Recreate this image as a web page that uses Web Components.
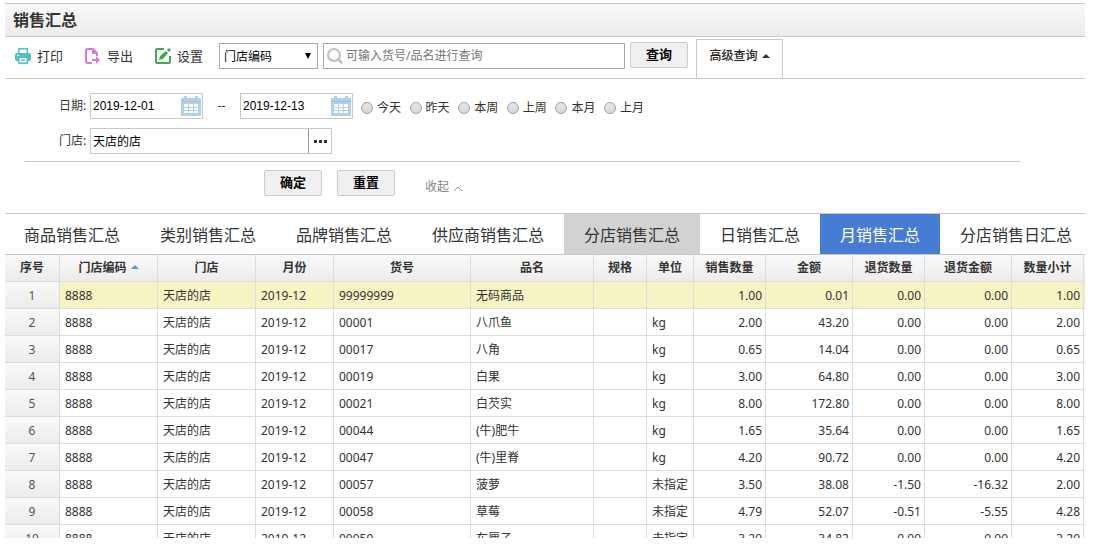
<!DOCTYPE html>
<html lang="zh-CN">
<head>
<meta charset="utf-8">
<title>销售汇总</title>
<style>
  html, body { margin: 0; height: 100%; }
  body { background: #fff; color: #333; font: 12px/18px "Noto Sans", "Noto Sans CJK SC", sans-serif; }
</style>
</head>
<body>
<sales-page></sales-page>

<template id="page-tpl">
  <style>
    :host { display: flex; flex-direction: column; box-sizing: border-box; height: 100vh; padding: 3px 9px 11px 5px; overflow: hidden; }
    h1 { margin: 0; padding: 0 8px; height: 32px; line-height: 32px; font-size: 16px; font-weight: 700; border: solid #c8c8c8; border-width: 1px 0; background: linear-gradient(#f8f8f8, #ececec); }
    .toolbar { display: flex; align-items: flex-start; border-bottom: 1px solid #c8c8c8; height: 41px; }
    .tools { display: flex; gap: 22px; padding: 9px 16px 0 10px; }
    .query { display: flex; gap: 5px; padding-top: 6px; }
    select { appearance: none; box-sizing: border-box; width: 99px; height: 26px; margin: 0; padding: 1px 4px 0; border: 1px solid #a9a9a9; border-radius: 0; font: inherit; color: #000;
      background: #fff url("data:image/svg+xml,%3Csvg xmlns='http://www.w3.org/2000/svg' width='6' height='6'%3E%3Cpath d='M0 0h6L3 6z'/%3E%3C/svg%3E") no-repeat right 6px center; }
    .search { display: flex; align-items: center; box-sizing: border-box; width: 302px; height: 26px; border: 1px solid #a9a9a9; padding-left: 2px; }
    .search svg { flex: none; }
    .search input { flex: 1; min-width: 0; border: 0; outline: 0; padding: 0 2px; font: inherit; background: none; }
    .search input::placeholder { color: #757575; }
    .adv { box-sizing: border-box; width: 87px; height: 39px; margin: 2px 0 0 8px; padding: 0 0 6px; border: 1px solid #c8c8c8; border-bottom: 0; background: #fff; font: inherit; color: #222; display: flex; align-items: center; justify-content: center; gap: 4px; font-weight: 500; }
  </style>
  <h1>销售汇总</h1>
  <div class="toolbar">
    <div class="tools">
      <tool-button label="打印"><svg slot="icon" width="16" height="16" viewBox="0 0 16 16"><path fill="#4fbdca" fill-rule="evenodd" d="M4 0h8q1 0 1 1v4H3V1q0-1 1-1zM4.500 1.500V5h7V1.500z"/><path fill="#4fbdca" fill-rule="evenodd" d="M2 5h12q2 0 2 2v4q0 2-2 2h-1v2q0 1-1 1H4q-1 0-1-1v-2H2q-2 0-2-2V7q0-2 2-2zM2 7v1h2V7zM4.500 10v4.500h7V10z"/><path fill="#4fbdca" d="M6 11.500h4V13H6z"/></svg></tool-button>
      <tool-button label="导出"><svg slot="icon" width="16" height="16" viewBox="0 0 16 16"><path fill="none" stroke="#cf7be0" stroke-width="2" d="M12 8V5L8 1H3Q1 1 1 3v10q0 2 2 2h4"/><path fill="#cf7be0" d="M7 1h1l5 5H8Q7 6 7 5zM7 11h4V8l4 4-4 4v-3H7z"/></svg></tool-button>
      <tool-button label="设置"><svg slot="icon" width="16" height="16" viewBox="0 0 16 16"><path fill="none" stroke="#41ab4b" stroke-width="2" d="M9 1H2Q1 1 1 2v12q0 1 1 1h12q1 0 1-1V8"/><path fill="#41ab4b" d="M4 12l1-4 6-5 2 2-5 6zM12 2l2-2 2 2-2 2z"/></svg></tool-button>
    </div>
    <div class="query">
      <select aria-label="查询字段"><option>门店编码</option></select>
      <label class="search">
        <svg width="18" height="18" viewBox="0 0 18 18" fill="none" stroke="#bdbdbd"><circle cx="8" cy="8" r="6" stroke-width="2"/><path d="M12 12l4 4" stroke-width="2.500"/></svg>
        <input type="text" placeholder="可输入货号/品名进行查询" aria-label="查询">
      </label>
    </div>
    <push-button class="go">查询</push-button>
    <button class="adv" type="button" aria-expanded="true">高级查询<svg width="8" height="4" viewBox="0 0 8 4"><path d="M0 4l4-4 4 4z" fill="#333"/></svg></button>
  </div>
  <style>.go { margin: 5px 0 0 5px; }</style>
  <advanced-query></advanced-query>
  <report-tabs></report-tabs>
  <sales-grid></sales-grid>
</template>

<template id="tool-tpl">
  <style>
    :host { display: block; }
    button { display: flex; align-items: center; gap: 6px; padding: 0; border: 0; background: none; color: inherit; font: inherit; font-size: 13px; line-height: 20px; }
    ::slotted(svg) { display: block; }
  </style>
  <button type="button"><slot name="icon"></slot><span></span></button>
</template>

<template id="push-tpl">
  <style>
    :host { display: block; }
    button { box-sizing: border-box; width: 58px; height: 26px; padding: 0 0 2px; border: 1px solid #ccc; border-radius: 2px; background: #f0f0f0; color: #000; font: inherit; font-size: 13px; font-weight: 700; line-height: 22px; }
  </style>
  <button type="button"><slot></slot></button>
</template>

<template id="adv-tpl">
  <style>
    :host { display: block; height: 134px; flex: none; }
    .row { display: flex; align-items: center; height: 26px; padding-left: 54px; }
    .row.first { margin: 14px 0 9px; }
    .name { width: 31px; line-height: 24px; }
    .dash { width: 37px; text-align: center; }
    fieldset { display: flex; justify-content: space-between; width: 283px; margin: 0 0 0 8px; padding: 4px 0 0; border: 0; }
    fieldset label { display: flex; align-items: center; gap: 4px; }
    input[type=radio] { appearance: none; box-sizing: border-box; width: 12px; height: 12px; margin: 0; border: 1px solid #a2a2a2; border-radius: 50%; background: linear-gradient(#e8e8e8, #d6d6d6); }
    .shop { display: flex; box-sizing: border-box; width: 242px; height: 26px; border: 1px solid #c8c8c8; }
    .shop input { flex: 1; min-width: 0; border: 0; outline: 0; padding: 2px 2px 0; font: inherit; color: #000; }
    .shop button { width: 23px; padding: 0; border: 0; border-left: 1px solid #999; background: #fff; }
    .shop svg { display: block; margin: auto; }
    hr { margin: 7px 65px 8px 20px; border: 0; border-top: 1px solid #c8c8c8; }
    .actions { display: flex; gap: 15px; padding-left: 259px; }
    a { display: flex; align-items: center; gap: 5px; margin: 8px 0 0 15px; height: 18px; color: #888; text-decoration: none; }
    a svg { margin-top: 2px; }
  </style>
  <div class="row first">
    <label class="name" for="from">日期:</label>
    <date-box id="from" value="2019-12-01"></date-box><span class="dash">--</span><date-box value="2019-12-13"></date-box>
    <fieldset aria-label="日期范围">
      <label><input type="radio" name="range">今天</label>
      <label><input type="radio" name="range">昨天</label>
      <label><input type="radio" name="range">本周</label>
      <label><input type="radio" name="range">上周</label>
      <label><input type="radio" name="range">本月</label>
      <label><input type="radio" name="range">上月</label>
    </fieldset>
  </div>
  <div class="row">
    <label class="name" for="shop">门店:</label>
    <div class="shop"><input id="shop" type="text" value="天店的店"><button type="button" aria-label="选择门店"><svg width="13" height="3" viewBox="0 0 13 3" fill="#333"><path d="M0 0h3v3H0zM5 0h3v3H5zM10 0h3v3h-3z"/></svg></button></div>
  </div>
  <hr>
  <div class="actions">
    <push-button>确定</push-button><push-button>重置</push-button>
    <a href="#">收起<svg width="8" height="5" viewBox="0 0 8 5" fill="none" stroke="#999"><path d="M0 5l4-4 4 4"/></svg></a>
  </div>
</template>

<template id="date-tpl">
  <style>
    :host { display: flex; align-items: center; box-sizing: border-box; width: 113px; height: 26px; border: 1px solid #c8c8c8; padding-right: 1px; }
    input { flex: 1; min-width: 0; border: 0; outline: 0; padding: 0 2px; font: 12px/18px "Liberation Sans", sans-serif; color: #000; }
    svg { flex: none; }
  </style>
  <input type="text" aria-label="日期">
  <svg width="20" height="20" viewBox="0 0 20 20"><path fill="#b2d0e8" d="M0 2h3V0h3v2h8V0h3v2h3v18H0z"/><path fill="#9cc2e0" d="M0 5h20v1H0z"/><path fill="#fff" d="M3 8h4v3H3zM8 8h4v3H8zM13 8h4v3h-4zM3 12h4v2H3zM8 12h4v2H8zM13 12h4v2h-4zM3 15h4v2H3zM8 15h4v2H8zM13 15h4v2h-4z"/></svg>
</template>

<template id="tabs-tpl">
  <style>
    :host { display: block; flex: none; border: solid #c8c8c8; border-width: 1px 0; overflow: hidden; }
    nav { display: flex; margin-left: -1px; }
    a { flex: none; height: 40px; line-height: 42px; padding: 0 20px; font-size: 16px; color: #333; text-decoration: none; }
    a.hover { background: #d2d2d2; }
    a.current { background: #467cd4; color: #fff; }
  </style>
  <nav>
    <a href="#">商品销售汇总</a><a href="#">类别销售汇总</a><a href="#">品牌销售汇总</a><a href="#">供应商销售汇总</a><a href="#" class="hover">分店销售汇总</a><a href="#">日销售汇总</a><a href="#" class="current" aria-current="page">月销售汇总</a><a href="#">分店销售日汇总</a>
  </nav>
</template>

<template id="grid-tpl">
  <style>
    :host { display: block; flex: 1; min-height: 0; overflow: hidden; }
    table { width: 100%; table-layout: fixed; border-collapse: separate; border-spacing: 0; }
    th, td { box-sizing: border-box; height: 27px; padding: 2px 5px 0; border: solid #dcdcdc; border-width: 0 1px 1px 0; line-height: 24px; text-align: left; white-space: nowrap; overflow: hidden; }
    thead th { padding-top: 0; text-align: center; font-weight: 700; background: linear-gradient(#f9f9f9, #ececec); }
    tbody th { text-align: center; font-weight: 400; color: #555; background: linear-gradient(#f9f9f9, #ececec); }
    td.num { text-align: right; padding-right: 3px; }
    .fill { padding: 0; border-right: 0; }
    tr.on td { background: #f7f4c4; }
    thead svg { margin-left: 4px; vertical-align: 3px; }
  </style>
  <table>
    <colgroup></colgroup>
    <thead><tr></tr></thead>
    <tbody></tbody>
  </table>
</template>

<script>
  const stamp = (el, id, options) => {
    const root = el.attachShadow({ mode: 'open', ...options });
    root.append(document.getElementById(id).content.cloneNode(true));
    return root;
  };

  customElements.define('tool-button', class extends HTMLElement {
    connectedCallback() {
      if (this.shadowRoot) return;
      stamp(this, 'tool-tpl').querySelector('span').textContent = this.getAttribute('label');
    }
  });

  customElements.define('push-button', class extends HTMLElement {
    constructor() { super(); stamp(this, 'push-tpl'); }
  });

  customElements.define('date-box', class extends HTMLElement {
    static formAssociated = true;
    connectedCallback() {
      if (this.shadowRoot) return;
      stamp(this, 'date-tpl', { delegatesFocus: true }).querySelector('input').value = this.getAttribute('value');
    }
  });

  customElements.define('advanced-query', class extends HTMLElement {
    constructor() { super(); stamp(this, 'adv-tpl'); }
  });

  customElements.define('report-tabs', class extends HTMLElement {
    constructor() { super(); stamp(this, 'tabs-tpl'); }
  });

  const COLUMNS = [
    ['序号', 55], ['门店编码', 98], ['门店', 98], ['月份', 78], ['货号', 137], ['品名', 123], ['规格', 53],
    ['单位', 47], ['销售数量', 72], ['金额', 87], ['退货数量', 72], ['退货金额', 87], ['数量小计', 72]
  ];
  const ROWS = [
    ['99999999', '无码商品', '', '1.00', '0.01', '0.00', '0.00', '1.00'],
    ['00001', '八爪鱼', 'kg', '2.00', '43.20', '0.00', '0.00', '2.00'],
    ['00017', '八角', 'kg', '0.65', '14.04', '0.00', '0.00', '0.65'],
    ['00019', '白果', 'kg', '3.00', '64.80', '0.00', '0.00', '3.00'],
    ['00021', '白芡实', 'kg', '8.00', '172.80', '0.00', '0.00', '8.00'],
    ['00044', '(牛)肥牛', 'kg', '1.65', '35.64', '0.00', '0.00', '1.65'],
    ['00047', '(牛)里脊', 'kg', '4.20', '90.72', '0.00', '0.00', '4.20'],
    ['00057', '菠萝', '未指定', '3.50', '38.08', '-1.50', '-16.32', '2.00'],
    ['00058', '草莓', '未指定', '4.79', '52.07', '-0.51', '-5.55', '4.28'],
    ['00059', '车厘子', '未指定', '3.20', '34.82', '0.00', '0.00', '3.20']
  ];

  customElements.define('sales-grid', class extends HTMLElement {
    constructor() {
      super();
      const root = stamp(this, 'grid-tpl');
      const arrow = '<svg width="8" height="4" viewBox="0 0 8 4"><path d="M0 4l4-4 4 4z" fill="#5f92d2"/></svg>';
      root.querySelector('colgroup').innerHTML = COLUMNS.map(([, w]) => `<col style="width:${w}px">`).join('') + '<col>';
      root.querySelector('thead tr').innerHTML =
        COLUMNS.map(([name], i) => `<th scope="col">${name}${i === 1 ? arrow : ''}</th>`).join('') + '<th class="fill"></th>';
      root.querySelector('tbody').innerHTML = ROWS.map(([code, name, unit, ...nums], i) =>
        `<tr${i === 0 ? ' class="on"' : ''}><th scope="row">${i + 1}</th>` +
        ['8888', '天店的店', '2019-12', code, name, '', unit].map(v => `<td>${v}</td>`).join('') +
        nums.map(v => `<td class="num">${v}</td>`).join('') + '<td class="fill"></td></tr>').join('');
    }
  });

  customElements.define('sales-page', class extends HTMLElement {
    constructor() { super(); stamp(this, 'page-tpl'); }
  });
</script>
</body>
</html>
